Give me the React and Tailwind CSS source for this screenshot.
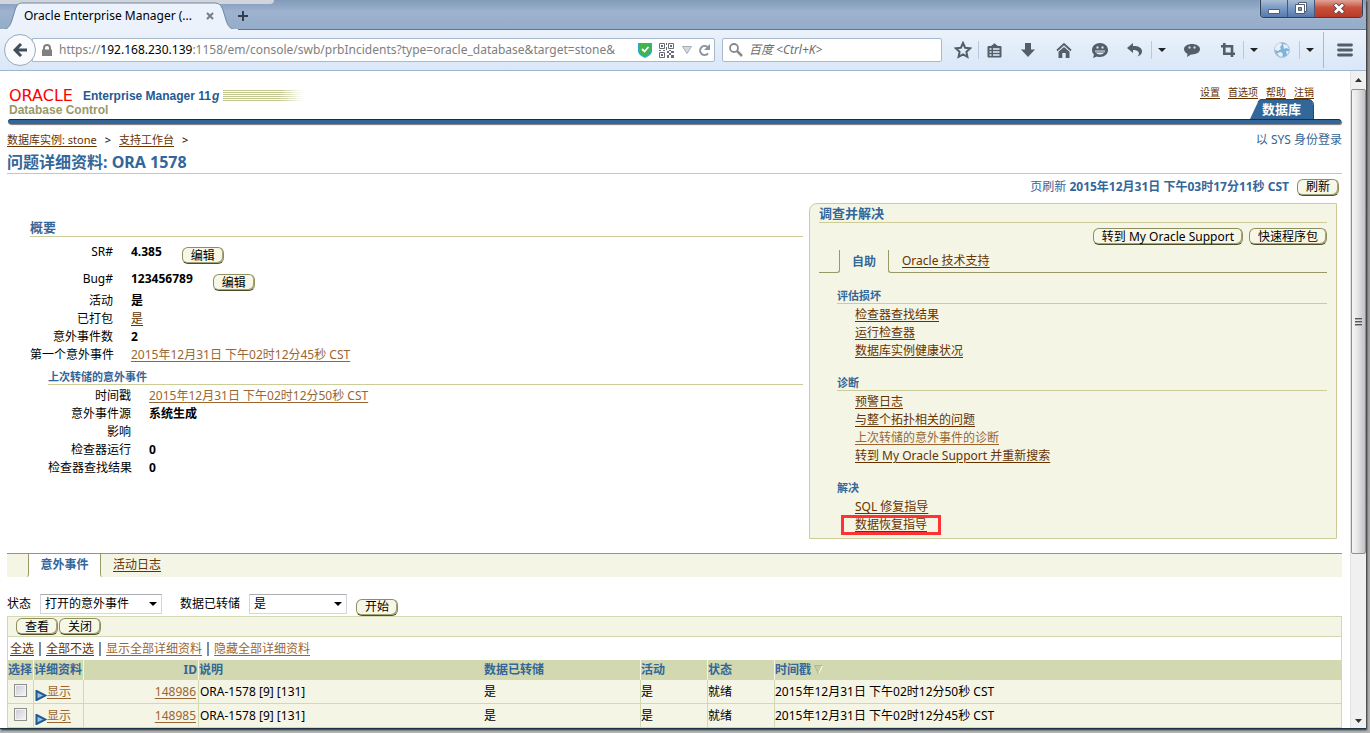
import React from "react";

const FONT = "font-['Noto_Sans','Noto_Sans_CJK_SC',sans-serif]";

const incidents = [
  { id: "148986", text: "ORA-1578 [9] [131]", dumped: "是", active: "是", status: "就绪", time: "2015年12月31日 下午02时12分50秒 CST" },
  { id: "148985", text: "ORA-1578 [9] [131]", dumped: "是", active: "是", status: "就绪", time: "2015年12月31日 下午02时12分45秒 CST" },
];

const sections = [
  {
    title: "评估损坏",
    line: true,
    links: [{ label: "检查器查找结果" }, { label: "运行检查器" }, { label: "数据库实例健康状况" }],
  },
  {
    title: "诊断",
    line: true,
    links: [
      { label: "预警日志" },
      { label: "与整个拓扑相关的问题" },
      { label: "上次转储的意外事件的诊断", visited: true },
      { label: "转到 My Oracle Support 并重新搜索" },
    ],
  },
  {
    title: "解决",
    line: false,
    links: [{ label: "SQL 修复指导" }, { label: "数据恢复指导", marked: true }],
  },
];

const A = ({ children, visited, className = "" }) => (
  <a href="#" className={`underline underline-offset-2 ${visited ? "text-[#996633]" : "text-[#663300]"} ${className}`}>
    {children}
  </a>
);

const PillButton = ({ children, className = "" }) => (
  <button
    type="button"
    className={`h-[17px] shrink-0 whitespace-nowrap rounded-[6px] border border-[#8f8f5c] border-b-[#4d4d26] bg-[#f7f7e7] px-2 text-xs leading-[14px] text-black shadow-[inset_-1px_-1px_0_#a3a37a] ${className}`}
  >
    {children}
  </button>
);

const Sep = ({ tall }) => <div className={`w-px shrink-0 ${tall ? "h-9 bg-[#a9bace]" : "h-[18px] bg-[#b9c8da]"}`} />;

const ToolButton = ({ label, width = "w-9", children }) => (
  <button type="button" aria-label={label} className={`flex h-8 shrink-0 items-center justify-center text-[#535e6a] ${width}`}>
    {children}
  </button>
);

const Caret = ({ label }) => (
  <ToolButton label={label} width="w-5">
    <svg width="8" height="4" viewBox="0 0 8 4">
      <path d="M0 0h8L4 4z" fill="#222" />
    </svg>
  </ToolButton>
);

const TitleBar = () => (
  <div className="relative flex h-[30px] items-end justify-between border-b border-[#5f7690] bg-linear-to-b from-[#819bb9] via-[#9db2cf] via-40% to-[#95adc9]">
    <div className="absolute top-0 left-0 h-1 w-[274px] rounded-br bg-[#d0d5db]" />
    <div className="relative z-10 -mb-px flex items-end">
      <div className="relative h-7 w-[238px]">
        <svg width="238" height="28" viewBox="0 0 238 28" className="absolute inset-0">
          <path d="M0 28c8 0 10-4 12-10l3-10c2-6 4-7 8-7h191c5 0 7 2 9 7l3 10c2 6 4 10 12 10z" fill="#ecf2fb" stroke="#70869f" />
          <path d="M0 28h238" stroke="#ecf2fb" strokeWidth="2" />
        </svg>
        <div className="relative flex h-7 items-center justify-between pr-6 pl-6 text-xs text-black">
          <span className="whitespace-nowrap">Oracle Enterprise Manager (...</span>
          <button type="button" aria-label="关闭标签页">
            <svg width="8" height="8" viewBox="0 0 8 8">
              <path d="M1 1l6 6M7 1L1 7" stroke="#757d86" strokeWidth="2" />
            </svg>
          </button>
        </div>
      </div>
      <button type="button" aria-label="新标签页" className="flex h-7 w-[10px] items-center">
        <svg width="10" height="10" viewBox="0 0 10 10">
          <path d="M5 0v10M0 5h10" stroke="#333e4a" strokeWidth="2" />
        </svg>
      </button>
    </div>
    <div className="mr-[3px] flex h-[18px] self-start overflow-hidden rounded-b-[4px] border border-t-0 border-[#333f55] shadow-[0_0_1px_#fff]">
      <button type="button" aria-label="最小化" className="flex w-[27px] items-end justify-center border-r border-[#45577a] bg-linear-to-b from-[#a9bdd6] via-[#7d9bc5] via-45% to-[#5579ad] pb-[3px]">
        <svg width="12" height="5" viewBox="0 0 12 5">
          <path d="M.5.5h11v4H.5z" fill="#fff" stroke="#545d70" />
        </svg>
      </button>
      <button type="button" aria-label="还原" className="flex w-[27px] items-center justify-center border-r border-[#45577a] bg-linear-to-b from-[#a9bdd6] via-[#7d9bc5] via-45% to-[#5579ad]">
        <svg width="13" height="13" viewBox="0 0 13 13">
          <path d="M3.500.5h8v9h-8z" fill="#fff" stroke="#545d70" />
          <path d="M.5 2.500h9v9h-9z" fill="#fff" stroke="#545d70" />
          <path d="M3.500 5.500h3v3h-3z" fill="#7d9bc5" stroke="#545d70" />
        </svg>
      </button>
      <button type="button" aria-label="关闭" className="flex w-[47px] items-center justify-center bg-linear-to-b from-[#dfa497] via-[#c8503c] via-45% to-[#b93a26]">
        <svg width="12" height="11" viewBox="0 0 12 11">
          <path d="M1.500 1l9 9M10.500 1l-9 9" stroke="#5a4650" strokeWidth="4.500" />
          <path d="M2 1.500l8 8M10 1.500l-8 8" stroke="#fff" strokeWidth="2.800" />
        </svg>
      </button>
    </div>
  </div>
);

const Toolbar = () => (
  <div className="flex h-[41px] items-center border-b border-[#9fb6d1] bg-linear-to-b from-[#ebf2fb] to-[#d9e7f7]">
    <button type="button" aria-label="后退" className="z-10 ml-1 flex size-8 shrink-0 items-center justify-center rounded-full border border-[#9aa9ba] bg-[#f8fafd]">
      <svg width="14" height="14" viewBox="0 0 14 14">
        <path d="M8 1L2 7l6 6M2 7h12" fill="none" stroke="#414d59" strokeWidth="3" />
      </svg>
    </button>
    <div className="-ml-1 flex h-6 min-w-0 flex-1 items-center rounded-r-[2px] border border-[#a9b9cb] bg-white pr-[3px] pl-2">
      <svg width="12" height="12" viewBox="0 0 12 12" className="mr-[6px] shrink-0">
        <path d="M3 6V4a3 3 0 016 0v2" fill="none" stroke="#808080" strokeWidth="2" />
        <path d="M1 5.500h10V12H1z" fill="#808080" />
      </svg>
      <div role="textbox" aria-label="地址" className="min-w-0 flex-1 overflow-hidden text-xs whitespace-nowrap text-[#808080]">
        https://<span className="text-black">192.168.230.139</span>:1158/em/console/swb/prbIncidents?type=oracle_database&amp;target=stone&amp;
      </div>
      <svg width="14" height="16" viewBox="0 0 14 16" className="mx-[7px] shrink-0">
        <path d="M0 1h14v8c0 3-3 5-7 7-4-2-7-4-7-7z" fill="#2fa8c9" />
        <path d="M1.500 2h11v7c0 2-2 4-5.500 5.500C3.500 13 1.500 11 1.500 9z" fill="#3fb54a" />
        <path d="M4 7l2.500 2.500L10.500 5" fill="none" stroke="#fff" strokeWidth="1.800" />
      </svg>
      <svg width="15" height="15" viewBox="0 0 15 15" className="shrink-0">
        <g fill="none" stroke="#6a6e74">
          <path d="M.5.5h5v5h-5zM9.500.5h5v5h-5zM.5 9.500h5v5h-5z" />
        </g>
        <path d="M2 2h2v2H2zM11 2h2v2h-2zM2 11h2v2H2zM7 0h1v2H7zM7 4h1v3H7zM0 7h2v1H0zM4 7h2v1H4zM8 8h2v2H8zM10 10h2v2h-2zM12 8h3v2h-3zM8 12h2v3H8zM12 12h3v3h-3zM10 7h2v1h-2z" fill="#6a6e74" />
      </svg>
      <svg width="10" height="8" viewBox="0 0 10 8" className="mr-[6px] ml-2 shrink-0">
        <path d="M.5.5h9L5 7.500z" fill="#d3d9e0" stroke="#a5adb7" />
      </svg>
      <svg width="13" height="13" viewBox="0 0 13 13" className="shrink-0">
        <path d="M10 9.500A4.500 4.500 0 119.500 3" fill="none" stroke="#8593a3" strokeWidth="2" />
        <path d="M12 0v6H6z" fill="#8593a3" />
      </svg>
    </div>
    <div className="ml-[7px] flex h-6 w-[220px] shrink-0 items-center rounded-[2px] border border-[#a9b9cb] bg-white pl-[6px]">
      <svg width="14" height="14" viewBox="0 0 14 14" className="mr-[6px] shrink-0">
        <circle cx="5" cy="5" r="4" fill="none" stroke="#8b8b8b" strokeWidth="1.800" />
        <path d="M8 8l5 5" stroke="#8b8b8b" strokeWidth="2.500" />
      </svg>
      <input aria-label="搜索" placeholder="百度 <Ctrl+K>" className="min-w-0 flex-1 bg-transparent text-xs italic outline-none placeholder:text-[#6d6d6d]" />
    </div>
    <ToolButton label="收藏" width="w-9 pl-[6px]">
      <svg width="18" height="18" viewBox="0 0 18 18">
        <path d="M9 2l2.100 4.700 5 .6-3.700 3.500 1 5L9 13.300l-4.400 2.500 1-5L1.900 7.300l5-.6z" fill="none" stroke="currentColor" strokeWidth="2" />
      </svg>
    </ToolButton>
    <Sep />
    <ToolButton label="书签" width="w-[31px]">
      <svg width="15" height="15" viewBox="0 0 15 15">
        <path d="M1.500 3h12a1 1 0 011 1v9.500a1 1 0 01-1 1h-12a1 1 0 01-1-1V4a1 1 0 011-1z" fill="currentColor" />
        <path d="M4.500 3c0-1 1-1 1.500-1.200C6.500 0 8.500 0 9 1.800c.5.200 1.500.2 1.500 1.200z" fill="currentColor" />
        <path d="M2.500 6h2M6 6h6.500M2.500 9h2M6 9h6.500M2.500 12h2M6 12h6.500" stroke="#e6eff9" strokeWidth="1.600" />
      </svg>
    </ToolButton>
    <ToolButton label="下载">
      <svg width="14" height="14" viewBox="0 0 14 14">
        <path d="M4 0h6v6.500h4L7 14 0 6.500h4z" fill="currentColor" />
      </svg>
    </ToolButton>
    <ToolButton label="主页">
      <svg width="16" height="15" viewBox="0 0 16 15">
        <path d="M1 7.500L8 1l7 6.500" fill="none" stroke="currentColor" strokeWidth="1.800" />
        <path d="M2.500 8.800L8 4l5.500 4.800V15H9.700v-5H6.300v5H2.500z" fill="currentColor" />
      </svg>
    </ToolButton>
    <ToolButton label="聊天">
      <svg width="16" height="15" viewBox="0 0 16 15">
        <path d="M8 0c4.500 0 8 3 8 7s-3.500 7-8 7c-1 0-2 0-3-.5L1 15l1-3.500C.7 10.300 0 8.800 0 7c0-4 3.500-7 8-7z" fill="currentColor" />
        <path d="M3 7.500h10c-.5 2.500-2.500 4-5 4s-4.500-1.500-5-4zM4.500 3.500h2v2h-2zM9.500 3.500h2v2h-2z" fill="#e3edf8" />
        <path d="M4 9h8" stroke="currentColor" />
      </svg>
    </ToolButton>
    <ToolButton label="撤销" width="w-[33px]">
      <svg width="15" height="14" viewBox="0 0 15 14">
        <path d="M0 5l6-5v3c6 0 9 2 9 5.500 0 2.500-2 4.500-5 5 2-1.500 2.500-3 1.500-4.500C10.500 7.500 8.500 7 6 7v3z" fill="currentColor" />
      </svg>
    </ToolButton>
    <Sep />
    <Caret label="撤销列表" />
    <ToolButton label="消息" width="w-10">
      <svg width="16" height="13" viewBox="0 0 16 13">
        <path d="M8 0c4.500 0 8 2.200 8 5.200s-3.500 5.200-8 5.200H7L3 13l.5-3.300C1.300 8.700 0 7.100 0 5.200 0 2.200 3.500 0 8 0z" fill="currentColor" />
        <circle cx="5.500" cy="3.500" r="1.200" fill="#c4cfdb" />
        <circle cx="10.500" cy="3.500" r="1.200" fill="#c4cfdb" />
      </svg>
    </ToolButton>
    <ToolButton label="截图" width="w-[31px]">
      <svg width="14" height="14" viewBox="0 0 14 14">
        <path d="M0 3.300h11V14M3.300 0v10.700H14" fill="none" stroke="currentColor" strokeWidth="2.600" />
      </svg>
    </ToolButton>
    <Sep />
    <Caret label="截图选项" />
    <ToolButton label="网络" width="w-[35px]">
      <svg width="16" height="16" viewBox="0 0 16 16">
        <circle cx="8" cy="8" r="7.500" fill="#7db2dd" stroke="#b8c6d3" />
        <path d="M1 6c1-3 3-5 6-5l1 2-2 2 1 2-3 2-3-1zM9 2l4 1 2 4-3-1-2 1zM3 11l4-1 2 2-1 3-3-1zM12 9l3 0-2 4z" fill="#e8f0f6" />
      </svg>
    </ToolButton>
    <Sep />
    <Caret label="网络选项" />
    <div className="w-[3px] shrink-0" />
    <Sep tall />
    <ToolButton label="菜单" width="w-[42px]">
      <svg width="16" height="14" viewBox="0 0 16 14">
        <path d="M1.500 2h13M1.500 7h13M1.500 12h13" stroke="currentColor" strokeWidth="2.800" strokeLinecap="round" />
      </svg>
    </ToolButton>
  </div>
);

const ScrollBar = () => (
  <div className="flex w-4 shrink-0 flex-col items-center border-l border-[#e3e3e3] bg-[#f0f0f0] pt-[7px] pb-[5px]">
    <svg width="7" height="4" viewBox="0 0 7 4" className="shrink-0">
      <path d="M0 4h7L3.500 0z" fill="#333" />
    </svg>
    <div className="mt-[7px] flex h-[465px] w-full shrink-0 items-center justify-center rounded-[2px] border border-[#8e8f8f] bg-linear-to-r from-[#f5f5f5] via-[#e8e8eb] via-40% to-[#c0c1c5]">
      <svg width="7" height="8" viewBox="0 0 7 8">
        <path d="M0 .5h7M0 3.500h7M0 6.500h7" stroke="#555" />
        <path d="M0 1.500h7M0 4.500h7M0 7.500h7" stroke="#aaa" />
      </svg>
    </div>
    <div className="flex-1" />
    <svg width="7" height="4" viewBox="0 0 7 4" className="shrink-0">
      <path d="M0 0h7L3.500 4z" fill="#333" />
    </svg>
  </div>
);

const BrandHeader = () => (
  <header>
    <div className="flex h-12 items-end justify-between pl-[2px] pr-7">
      <div className="pb-[2px] font-['Liberation_Sans','Noto_Sans_CJK_SC',sans-serif] text-xs font-bold">
        <div className="flex h-4 items-center pt-px">
          <span className="font-['DejaVu_Sans',sans-serif] text-base leading-4 font-normal text-[#ff0000]">ORACLE</span>
          <span className="ml-[10px] text-[#1f5a94]">
            Enterprise Manager 11<i className="ml-px">g</i>
          </span>
          <svg width="80" height="11" viewBox="0 0 80 11" className="ml-1">
            <defs>
              <linearGradient id="fade" gradientUnits="userSpaceOnUse" x1="0" y1="0" x2="80" y2="0">
                <stop offset="0.7" stopColor="#c3c890" />
                <stop offset="1" stopColor="#c3c890" stopOpacity="0" />
              </linearGradient>
            </defs>
            <path d="M0 0h80v1H0zM0 2h80v1H0zM0 4h80v1H0zM0 6h80v1H0zM0 8h80v1H0zM0 10h80v1H0z" fill="url(#fade)" />
          </svg>
        </div>
        <div className="h-[14px] leading-[14px] text-[#999966]">Database Control</div>
      </div>
      <div className="flex flex-col items-end">
        <nav className="flex gap-2 text-[10px] leading-[14px]">
          <A>设置</A>
          <A>首选项</A>
          <A>帮助</A>
          <A>注销</A>
        </nav>
        <div className="relative h-5 w-16">
          <svg width="64" height="20" viewBox="0 0 64 20" className="absolute inset-0">
            <path d="M0 20L8 3c1-2 2-2.500 4-2.500h46c3 0 5 2 5 5V20z" fill="#336699" />
            <path d="M8 3c1-2 2-2.500 4-2.500h46c3 0 5.500 2 5.500 5V20" fill="none" stroke="#1f4a78" />
          </svg>
          <a href="#" className="relative block pl-3 text-[13px] leading-5 font-bold text-white">
            数据库
          </a>
        </div>
      </div>
    </div>
    <div className="mx-px h-[5px] rounded-[3px] border-t border-[#003366] bg-[#336699] shadow-[1px_1px_1px_#777]" />
  </header>
);

const Field = ({ label, children, tall }) => (
  <div className={`flex items-center ${tall ? "h-[27px]" : "h-[18px]"}`}>
    <dt className="mr-[18px] w-[83px] shrink-0 text-right whitespace-nowrap">{label}</dt>
    <dd className="flex items-center font-bold">{children}</dd>
  </div>
);

const Summary = () => (
  <section className="ml-[23px] min-w-0 flex-1 pt-[15px]">
    <h2 className="h-[19px] border-b border-[#cccc99] text-[13px] leading-[18px] font-bold text-[#336699]">概要</h2>
    <dl className="pt-px">
      <Field label="SR#" tall>
        4.385 <PillButton className="mt-2 ml-5 font-normal">编辑</PillButton>
      </Field>
      <Field label="Bug#" tall>
        123456789 <PillButton className="mt-2 ml-5 font-normal">编辑</PillButton>
      </Field>
      <Field label="活动">是</Field>
      <Field label="已打包">
        <A className="font-normal">是</A>
      </Field>
      <Field label="意外事件数">2</Field>
      <Field label="第一个意外事件">
        <A visited className="font-normal">2015年12月31日 下午02时12分45秒 CST</A>
      </Field>
    </dl>
    <div className="ml-[18px]">
      <h3 className="mt-1 h-[17px] border-b border-[#cccc99] text-[11px] leading-[18px] font-bold text-[#336699]">上次转储的意外事件</h3>
      <dl className="mt-[2px]">
        <Field label="时间戳">
          <A visited className="font-normal">2015年12月31日 下午02时12分50秒 CST</A>
        </Field>
        <Field label="意外事件源">系统生成</Field>
        <Field label="影响" />
        <Field label="检查器运行">0</Field>
        <Field label="检查器查找结果">0</Field>
      </dl>
    </div>
  </section>
);

const Investigate = () => (
  <section className="w-[528px] shrink-0 rounded-tl-[8px] border border-[#cccc99] bg-[#f5f5e6] pr-[9px] pb-1 pl-[9px]">
    <h2 className="h-[19px] border-b border-[#cccc99] text-[13px] leading-[18px] font-bold text-[#336699]">调查并解决</h2>
    <div className="flex h-[27px] items-center justify-end gap-[6px]">
      <PillButton>转到 My Oracle Support</PillButton>
      <PillButton>快速程序包</PillButton>
    </div>
    <div className="flex h-[23px]">
      <div className="w-[21px] rounded-br-[3px] border-r border-b border-[#999966]" />
      <div className="w-12 text-center leading-[23px] font-bold text-[#336699]">自助</div>
      <div className="flex-1 rounded-bl-[3px] border-b border-l border-[#999966] pl-[13px] leading-[22px]">
        <A>Oracle 技术支持</A>
      </div>
    </div>
    <div className="pl-[18px]">
      {sections.map((s) => (
        <div key={s.title} className="pt-[13px]">
          <h3 className={`h-[18px] border-b text-[11px] leading-5 font-bold text-[#336699] ${s.line ? "border-[#cccc99]" : "border-transparent"}`}>
            {s.title}
          </h3>
          <ul className="mt-[2px] pl-[18px]">
            {s.links.map((l) => (
              <li key={l.label} className="flex h-[18px] items-center">
                <span className="relative">
                  <A visited={l.visited}>{l.label}</A>
                  {l.marked && <span className="pointer-events-none absolute -inset-x-[14px] -inset-y-[2px] border-3 border-[#ff3333]" />}
                </span>
              </li>
            ))}
          </ul>
        </div>
      ))}
    </div>
  </section>
);

const Select = ({ id, label, value, width }) => (
  <>
    <label htmlFor={id}>{label}</label>
    <div className={`relative ml-[9px] ${width}`}>
      <select id={id} defaultValue={value} className="h-5 w-full appearance-none border border-[#d5d5de] border-t-[#abadb3] bg-white pl-1 text-xs text-black">
        <option>{value}</option>
      </select>
      <svg width="8" height="4" viewBox="0 0 8 4" className="pointer-events-none absolute top-2 right-[5px]">
        <path d="M0 0h8L4 4z" fill="#000" />
      </svg>
    </div>
  </>
);

const th = "border-l border-[#f5f5e6] text-left font-bold whitespace-nowrap";
const td = "border-l border-b border-[#d2d8b0] whitespace-nowrap";

const Incidents = () => (
  <section>
    <div className="mt-[14px] flex h-6 border-t border-[#999966] bg-[#f5f5e6]">
      <div className="w-[22px] rounded-br-[3px] border-r border-[#999966]" />
      <div className="w-[71px] bg-white text-center leading-[22px] font-bold text-[#336699]">意外事件</div>
      <div className="rounded-bl-[3px] border-l border-[#999966] pl-3 leading-[22px]">
        <A>活动日志</A>
      </div>
    </div>
    <div className="flex h-[39px] items-center pt-[15px]">
      <Select id="status" label="状态" value="打开的意外事件" width="w-[122px]" />
      <div className="w-[18px]" />
      <Select id="dumped" label="数据已转储" value="是" width="w-[98px]" />
      <PillButton className="mt-[6px] ml-[9px]">开始</PillButton>
    </div>
    <div className="flex h-[21px] items-center gap-px border border-[#d2d8b0] bg-[#f5f5e6] pl-2">
      <PillButton>查看</PillButton>
      <PillButton>关闭</PillButton>
    </div>
    <div className="flex h-[23px] items-center gap-[5px] border-x border-[#d2d8b0] pt-px pl-[2px]">
      <A>全选</A>
      <span className="h-[14px] w-[2px] bg-[#6f8fae]" />
      <A>全部不选</A>
      <span className="h-[14px] w-[2px] bg-[#6f8fae]" />
      <A visited>显示全部详细资料</A>
      <span className="h-[14px] w-[2px] bg-[#6f8fae]" />
      <A visited>隐藏全部详细资料</A>
    </div>
    <table className="w-full table-fixed border-separate border-spacing-0 border-r border-[#d2d8b0]">
      <colgroup>
        <col className="w-[26px]" />
        <col className="w-[50px]" />
        <col className="w-[115px]" />
        <col className="w-[285px]" />
        <col className="w-[157px]" />
        <col className="w-[67px]" />
        <col className="w-[67px]" />
        <col />
      </colgroup>
      <thead>
        <tr className="h-5 bg-[#d2d8b0] text-[#336699]">
          <th className="font-bold whitespace-nowrap">选择</th>
          <th className={th}>详细资料</th>
          <th className="border-l border-[#f5f5e6] pr-px text-right font-bold">ID</th>
          <th className={th}>说明</th>
          <th className="pl-px text-left font-bold">数据已转储</th>
          <th className={th}>活动</th>
          <th className={th}>状态</th>
          <th className={th}>
            <span className="flex items-center gap-[3px]">
              时间戳
              <svg width="9" height="10" viewBox="0 0 9 10">
                <path d="M.5.500h8L4.500 9z" fill="#c6cca0" />
                <path d="M8.500.500L4.500 9" stroke="#fff" />
                <path d="M4.500 9L.5.500h8" fill="none" stroke="#b1b78c" />
              </svg>
            </span>
          </th>
        </tr>
      </thead>
      <tbody>
        {incidents.map((row) => (
          <tr key={row.id} className="h-6 bg-[#f5f5e6]">
            <td className={td}>
              <input
                type="checkbox"
                aria-label={row.id}
                className="mx-auto mb-[2px] block size-[13px] appearance-none border border-[#8e8f8f] bg-linear-to-br from-[#c9ccd2] to-[#f6f6f6] shadow-[inset_0_0_0_1px_#f4f4f4]"
              />
            </td>
            <td className={td}>
              <span className="flex items-center pl-px">
                <svg width="12" height="11" viewBox="0 0 12 11" className="mt-2 shrink-0">
                  <path d="M1.500 1l9 4.500-9 4.500z" fill="#9fc0e0" stroke="#1f5a94" strokeWidth="2" />
                </svg>
                <A visited>显示</A>
              </span>
            </td>
            <td className="border-b border-l border-[#d2d8b0] pr-[2px] text-right">
              <A visited>{row.id}</A>
            </td>
            <td className={`${td} pl-px`}>{row.text}</td>
            <td className="border-b border-[#d2d8b0] pl-px">{row.dumped}</td>
            <td className={td}>{row.active}</td>
            <td className={td}>{row.status}</td>
            <td className={td}>{row.time}</td>
          </tr>
        ))}
      </tbody>
    </table>
  </section>
);

export default function App() {
  return (
    <div className={`h-screen overflow-hidden bg-linear-to-b from-[#8f8f8f] to-[#b5b5b5] pr-1 pb-1 text-xs text-black ${FONT}`}>
      <div className="flex h-full flex-col border-b border-[#1d3445] bg-white shadow-[1px_1px_2px_#222]">
        <TitleBar />
        <Toolbar />
        <div className="flex min-h-0 flex-1">
          <main className="min-w-0 flex-1 overflow-hidden pr-2 pl-[7px]">
            <BrandHeader />
            <div className="flex h-[26px] items-center justify-between pt-[6px]">
              <nav className="flex gap-2 text-[11px]">
                <A>数据库实例: stone</A>
                <span>&gt;</span>
                <A>支持工作台</A>
                <span>&gt;</span>
              </nav>
              <span className="text-[#336699]">以 SYS 身份登录</span>
            </div>
            <h1 className="h-6 border-b border-[#cccc99] text-base leading-6 font-bold text-[#336699]">问题详细资料: ORA 1578</h1>
            <div className="flex h-[29px] items-center justify-end pr-[3px] pb-[3px] text-[#336699]">
              <span>
                页刷新 <b>2015年12月31日 下午03时17分11秒 CST</b>
              </span>
              <PillButton className="ml-2">刷新</PillButton>
            </div>
            <div className="flex gap-[6px] pr-[5px]">
              <Summary />
              <Investigate />
            </div>
            <Incidents />
          </main>
          <ScrollBar />
        </div>
      </div>
    </div>
  );
}
